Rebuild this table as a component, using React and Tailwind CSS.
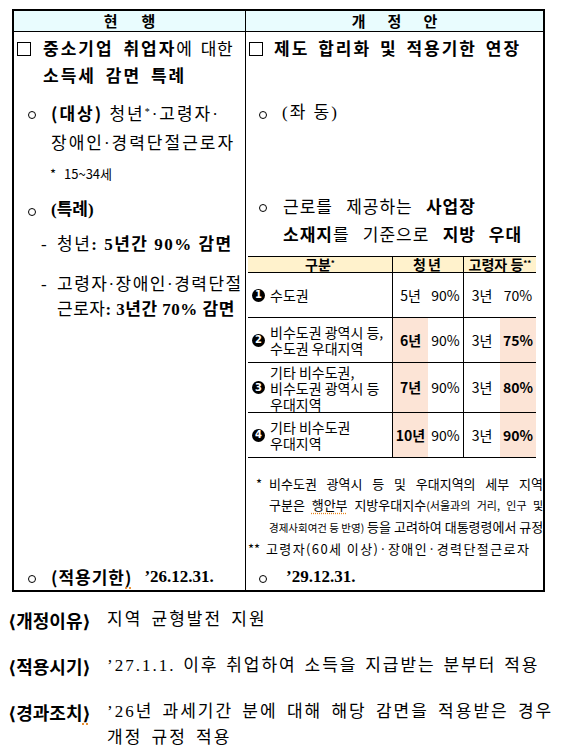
import React from "react";

const KR = "font-['Noto_Sans_CJK_KR',sans-serif]";
const SERIF = "font-['Liberation_Serif','Noto_Sans_CJK_KR',serif]";
const SYM = "font-['DejaVu_Sans',sans-serif]";

const Box = () => <span className="block w-[14px] h-[14px] border border-black" />;

const Circle = () => (
  <span className="inline-block w-[8px] h-[8px] rounded-full border border-black align-middle" />
);

const rows = [
  { n: "1", label: ["수도권"], a: "5년", b: "90%", c: "3년", d: "70%", hl: false, h: "h-[45px]" },
  { n: "2", label: ["비수도권 광역시 등,", "수도권 우대지역"], a: "6년", b: "90%", c: "3년", d: "75%", hl: true, h: "h-[45px]" },
  { n: "3", label: ["기타 비수도권,", "비수도권 광역시 등", "우대지역"], a: "7년", b: "90%", c: "3년", d: "80%", hl: true, h: "h-[50px]" },
  { n: "4", label: ["기타 비수도권", "우대지역"], a: "10년", b: "90%", c: "3년", d: "90%", hl: true, h: "h-[45px]" },
];

const RegionTable = () => (
  <div className={`ml-[2px] mt-[7px] w-[288px] text-[14px] ${KR}`}>
    <div className="grid grid-cols-[145px_71px_72px] h-[17px] border-y border-black bg-[#fff2cc] text-[14px] font-bold leading-[15px]">
      <div className="border-r border-black text-center">
        구분<sup className="text-[8px]">*</sup>
      </div>
      <div className="border-r border-black text-center tracking-[2px]">청년</div>
      <div className="text-center whitespace-nowrap">
        고령자 등<sup className="text-[8px]">**</sup>
      </div>
    </div>
    {rows.map((r) => (
      <div
        key={r.n}
        className={`grid grid-cols-[145px_35px_36px_36px_36px] border-b border-black ${r.h}`}
      >
        <div className="flex items-center border-r border-black pl-[4px]">
          <span className="w-[18px] shrink-0">
            <span
              className={`flex w-[13px] h-[13px] items-center justify-center rounded-full bg-black text-[10px] font-bold leading-none text-white ${SYM}`}
            >
              {r.n}
            </span>
          </span>
          <div className="leading-[16px] whitespace-nowrap">
            {r.label.map((l) => (
              <div key={l}>{l}</div>
            ))}
          </div>
        </div>
        <div
          className={`flex items-center justify-center ${
            r.hl ? "bg-[#fce4d6] font-bold" : ""
          }`}
        >
          {r.a}
        </div>
        <div className="flex items-center justify-center border-r border-black">{r.b}</div>
        <div className="flex items-center justify-center">{r.c}</div>
        <div
          className={`flex items-center justify-center ${
            r.hl ? "bg-[#fce4d6] font-bold" : ""
          }`}
        >
          {r.d}
        </div>
      </div>
    ))}
  </div>
);

const App = () => {
  return (
    <div className={`bg-white w-[563px] h-[751px] overflow-hidden text-black ${KR}`}>
      <div className="pt-[9px] pl-[12px]">
        <div className="w-[533px] border-2 border-black">
          {/* header */}
          <div className="grid grid-cols-[232px_297px] h-[21px] border-b border-black bg-[#e9fcfe] text-[15px] font-bold leading-[20px]">
            <div className="flex justify-center gap-[24px] border-r border-black">
              <span>현</span>
              <span>행</span>
            </div>
            <div className="flex justify-center gap-[22px]">
              <span>개</span>
              <span>정</span>
              <span>안</span>
            </div>
          </div>

          {/* body */}
          <div className="grid grid-cols-[232px_297px] h-[558px] text-[17px]">
            {/* current */}
            <div className="flex flex-col border-r border-black">
              <div className="flex pt-[2px] leading-[27px]">
                <div className="w-[29px] shrink-0 pl-[3px] pt-[8px]">
                  <Box />
                </div>
                <div className="whitespace-nowrap [word-spacing:4px]">
                  <div>
                    <b className="tracking-[2px]">중소기업 취업자</b>
                    <span className="tracking-[0.5px]">에 대한</span>
                  </div>
                  <div>
                    <b className="tracking-[2px]">소득세 감면 특례</b>
                  </div>
                </div>
              </div>

              <div className="flex mt-[10px] leading-[29px]">
                <span className="w-[37px] shrink-0 pl-[14px]">
                  <Circle />
                </span>
                <div className={`whitespace-nowrap tracking-[2px] ${SERIF}`}>
                  <div>
                    <b className={KR}>(대상)</b> 청년<sup className="text-[10px]">*</sup>·고령자·
                  </div>
                  <div>장애인·경력단절근로자</div>
                </div>
              </div>

              <div className="mt-[6px] pl-[36px] text-[13px] leading-[20px]">
                * <span className="ml-[5px]">15~34세</span>
              </div>

              <div className="flex mt-[12px] leading-[28px]">
                <span className="w-[37px] shrink-0 pl-[14px]">
                  <Circle />
                </span>
                <b className={SERIF}>(특례)</b>
              </div>

              <div className={`flex mt-[7px] leading-[28px] whitespace-nowrap ${SERIF}`}>
                <span className="w-[43px] shrink-0 pl-[27px]">-</span>
                <span className="tracking-[1.5px]">
                  청년<b>: 5년간 90% 감면</b>
                </span>
              </div>

              <div className={`flex mt-[13px] leading-[25px] whitespace-nowrap ${SERIF}`}>
                <span className="w-[43px] shrink-0 pl-[27px]">-</span>
                <div>
                  <div className="tracking-[1.5px]">고령자·장애인·경력단절</div>
                  <div className="tracking-[0.5px]">
                    근로자<b>: 3년간 70% 감면</b>
                  </div>
                </div>
              </div>

              <div className="flex mt-auto leading-[26px] whitespace-nowrap">
                <span className="w-[37px] shrink-0 pl-[14px]">
                  <Circle />
                </span>
                <b className="tracking-[1px]">
                  (적용기한
                  <span className="underline decoration-dotted decoration-[#e8841a] underline-offset-[4px]">)</span>
                </b>
                <b className={`ml-[12px] ${SERIF}`}>’26.12.31.</b>
              </div>
            </div>

            {/* revision */}
            <div className="flex flex-col">
              <div className="flex pt-[2px] leading-[27px]">
                <div className="w-[28px] shrink-0 pl-[3px] pt-[8px]">
                  <Box />
                </div>
                <b className="whitespace-nowrap tracking-[2px] [word-spacing:3px]">
                  제도 합리화 및 적용기한 연장
                </b>
              </div>

              <div className="flex mt-[38px] leading-[27px]">
                <span className="w-[36px] shrink-0 pl-[13px]">
                  <Circle />
                </span>
                <span className={`tracking-[2px] ${SERIF}`}>(좌 동)</span>
              </div>

              <div className="flex mt-[67px] leading-[26px]">
                <span className="w-[37px] shrink-0 pl-[13px]">
                  <Circle />
                </span>
                <div className={`whitespace-nowrap tracking-[1px] [word-spacing:8px] ${SERIF}`}>
                  <div>
                    근로를 제공하는 <b className={KR}>사업장</b>
                  </div>
                  <div>
                    <b className={KR}>소재지</b>를 기준으로 <b className={KR}>지방 우대</b>
                  </div>
                </div>
              </div>

              <RegionTable />

              <div className="mt-[15px] text-[13px] leading-[21px]">
                <div className="flex">
                  <span className="w-[23px] shrink-0 pl-[10px]">*</span>
                  <span className="flex-1 text-justify [text-align-last:justify]">
                    비수도권 광역시 등 및 우대지역의 세부 지역
                  </span>
                </div>
                <div className="pl-[23px] text-justify [text-align-last:justify] whitespace-nowrap">
                  구분은{" "}
                  <span className="underline decoration-dotted decoration-[#e8841a] underline-offset-[3px]">
                    행안부
                  </span>{" "}
                  지방우대지수<span className="text-[11px]">(서울과의 거리, 인구 및</span>
                </div>
                <div className="pl-[23px] text-justify [text-align-last:justify] whitespace-nowrap">
                  <span className="text-[10.5px]">경제사회여건 등 반영)</span> 등을 고려하여
                  대통령령에서 규정
                </div>
                <div className="flex whitespace-nowrap">
                  <span className="w-[20px] shrink-0 pl-[2px]">**</span>
                  <span className="tracking-[1.4px]">
                    고령자(60세 이상)·장애인·경력단절근로자
                  </span>
                </div>
              </div>

              <div className="flex mt-auto leading-[26px]">
                <span className="w-[40px] shrink-0 pl-[13px]">
                  <Circle />
                </span>
                <b className={SERIF}>’29.12.31.</b>
              </div>
            </div>
          </div>
        </div>
      </div>

      {/* notes */}
      <div className="pl-[8px] mt-[14px] whitespace-nowrap">
        <div className="flex leading-[28px]">
          <span className="w-[99px] shrink-0 text-[18px] font-bold">
            <span className={`leading-none ${SYM}`}>⟨</span>개정이유
            <span className={`leading-none ${SYM}`}>⟩</span>
          </span>
          <span className={`text-[17px] tracking-[2px] [word-spacing:3px] ${SERIF}`}>
            지역 균형발전 지원
          </span>
        </div>
        <div className="flex mt-[18px] leading-[28px]">
          <span className="w-[99px] shrink-0 text-[18px] font-bold">
            <span className={`leading-none ${SYM}`}>⟨</span>적용시기
            <span className={`leading-none ${SYM}`}>⟩</span>
          </span>
          <span className={`text-[17px] tracking-[2px] [word-spacing:1.5px] ${SERIF}`}>
            ’27.1.1. 이후 취업하여 소득을 지급받는 분부터 적용
          </span>
        </div>
        <div className="flex mt-[19px] leading-[26px]">
          <span className="w-[99px] shrink-0 text-[18px] font-bold">
            <span className={`leading-none ${SYM}`}>⟨</span>경과조치
            <span
              className={`leading-none underline decoration-dotted decoration-[#e8841a] underline-offset-[4px] ${SYM}`}
            >
              ⟩
            </span>
          </span>
          <div className={`text-[17px] tracking-[2px] [word-spacing:3px] ${SERIF}`}>
            <div>’26년 과세기간 분에 대해 해당 감면을 적용받은 경우</div>
            <div>개정 규정 적용</div>
          </div>
        </div>
      </div>
    </div>
  );
};

export default App;
